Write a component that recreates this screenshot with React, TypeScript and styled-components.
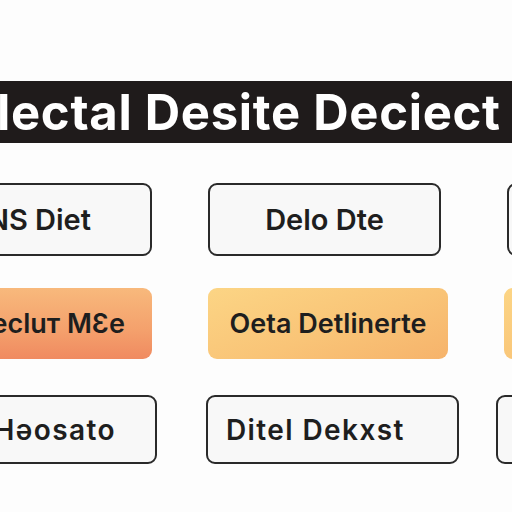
import React from "react";
import styled, { createGlobalStyle } from "styled-components";

const GlobalStyle = createGlobalStyle`
  html, body {
    margin: 0;
    padding: 0;
    background: #fdfdfd;
    overflow: hidden;
  }
  body {
    font-family: Inter, "Liberation Sans", sans-serif;
    color: #1e1e1e;
  }
`;

type Tone = "plain" | "warm" | "gold";
type Align = "center" | "end" | "start";

interface Tile {
  label: string;
  tone: Tone;
  align: Align;
  pad?: number;
  lead?: number;
}

interface Row {
  top: number;
  height: number;
  width: number;
  gap: number;
  offset: number;
  size: number;
  spacing: number;
  tiles: Tile[];
}

const rows: Row[] = [
  {
    top: 40,
    height: 73,
    width: 233,
    gap: 56,
    offset: -81,
    size: 29,
    spacing: 0,
    tiles: [
      { label: "NS Diet", tone: "plain", align: "end", pad: 59 },
      { label: "Delo Dte", tone: "plain", align: "center" },
      { label: "Desk", tone: "plain", align: "center", lead: 10 },
    ],
  },
  {
    top: 32,
    height: 71,
    width: 240,
    gap: 56,
    offset: -88,
    size: 27,
    spacing: 0,
    tiles: [
      { label: "Precluт MƐe", tone: "warm", align: "end", pad: 27 },
      { label: "Oeta Detlinerte", tone: "gold", align: "center" },
      { label: "Deta", tone: "gold", align: "center" },
    ],
  },
  {
    top: 36,
    height: 69,
    width: 253,
    gap: 49,
    offset: -96,
    size: 28,
    spacing: 1.4,
    tiles: [
      { label: "Hәosato", tone: "plain", align: "end", pad: 39 },
      { label: "Ditel Dekxst", tone: "plain", align: "start", pad: 18 },
      { label: "Desk", tone: "plain", align: "center", lead: -12 },
    ],
  },
];

function Board() {
  return (
    <Page>
      <GlobalStyle />
      <Banner>
        <BannerText>lectal Desite Deciect</BannerText>
      </Banner>
      {rows.map((row, i) => (
        <TileRow key={i} $top={row.top} $gap={row.gap} $offset={row.offset}>
          {row.tiles.map((tile, j) => (
            <TileButton
              key={j}
              $tone={tile.tone}
              $align={tile.align}
              $pad={tile.pad ?? 0}
              $lead={tile.lead ?? 0}
              $w={row.width}
              $h={row.height}
              $size={row.size}
              $spacing={row.spacing}
            >
              {tile.label}
            </TileButton>
          ))}
        </TileRow>
      ))}
    </Page>
  );
}

const Page = styled.div`
  width: 512px;
  height: 512px;
  overflow: hidden;
  padding-top: 81px;
  box-sizing: border-box;
`;

const Banner = styled.header`
  height: 62px;
  background: #1f1b1b;
  display: flex;
  align-items: center;
  overflow: hidden;
`;

const BannerText = styled.h1`
  margin: 0 0 0 -3px;
  font-size: 49px;
  font-weight: 700;
  color: #ffffff;
  white-space: nowrap;
  letter-spacing: 0.7px;
  line-height: 1;
`;

const TileRow = styled.div<{ $top: number; $gap: number; $offset: number }>`
  display: flex;
  gap: ${(p) => p.$gap}px;
  margin-top: ${(p) => p.$top}px;
  margin-left: ${(p) => p.$offset}px;
  width: max-content;
`;

const toneBg: Record<Tone, string> = {
  plain: "#f8f8f8",
  warm: "linear-gradient(180deg, #f8b97c 0%, #f4a06c 60%, #f08a60 100%)",
  gold: "linear-gradient(160deg, #fcd585 0%, #f9c477 55%, #f6b36b 100%)",
};

const TileButton = styled.button<{
  $tone: Tone;
  $align: Align;
  $pad: number;
  $lead: number;
  $w: number;
  $h: number;
  $size: number;
  $spacing: number;
}>`
  flex: none;
  width: ${(p) => p.$w}px;
  height: ${(p) => p.$h}px;
  margin-left: ${(p) => p.$lead}px;
  box-sizing: border-box;
  display: flex;
  align-items: center;
  justify-content: ${(p) =>
    p.$align === "end" ? "flex-end" : p.$align === "start" ? "flex-start" : "center"};
  padding: 0 ${(p) => (p.$align === "end" ? p.$pad : 0)}px 0
    ${(p) => (p.$align === "start" ? p.$pad : 0)}px;
  border: ${(p) => (p.$tone === "plain" ? "2px solid #2a2a2a" : "none")};
  border-radius: 9px;
  background: ${(p) => toneBg[p.$tone]};
  font-family: Inter, "Liberation Sans", sans-serif;
  font-size: ${(p) => p.$size}px;
  font-weight: 600;
  letter-spacing: ${(p) => p.$spacing}px;
  color: #1e1e1e;
  white-space: nowrap;
  overflow: hidden;
`;

export default function App() {
  return <Board />;
}
